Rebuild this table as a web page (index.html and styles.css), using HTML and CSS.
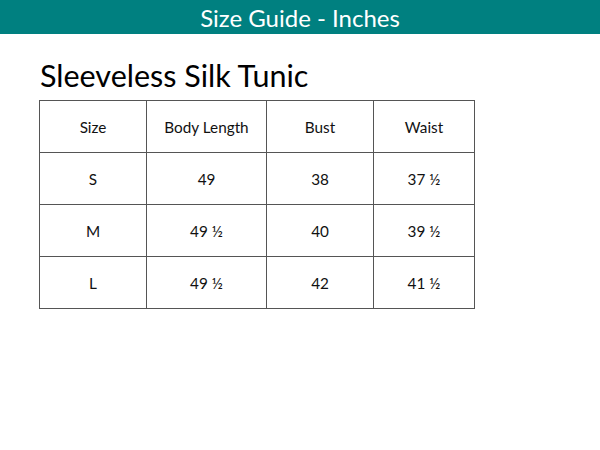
FILE: index.html
```html
<!DOCTYPE html>
<html>
<head>
<meta charset="utf-8">
<link rel="stylesheet" href="styles.css">
</head>
<body>
<header class="bar">Size Guide - Inches</header>
<main class="content">
  <h1 class="title">Sleeveless Silk Tunic</h1>
  <table class="sizes">
    <tr><td class="c1">Size</td><td class="c2">Body Length</td><td class="c3">Bust</td><td class="c4">Waist</td></tr>
    <tr><td>S</td><td>49</td><td>38</td><td>37 ½</td></tr>
    <tr><td>M</td><td>49 ½</td><td>40</td><td>39 ½</td></tr>
    <tr><td>L</td><td>49 ½</td><td>42</td><td>41 ½</td></tr>
  </table>
</main>
</body>
</html>
```
FILE: styles.css
```css
html, body {
  margin: 0;
  padding: 0;
  background: #fff;
  font-family: "Lato", "Open Sans", sans-serif;
  color: #111;
}
.bar {
  box-sizing: border-box;
  height: 34px;
  padding-top: 1px;
  background: #008080;
  color: #fff;
  font-size: 24px;
  line-height: 33px;
  text-align: center;
}
.content {
  padding: 20px 0 0 39px;
}
.title {
  margin: 0 0 4px 1px;
  font-weight: 400;
  font-size: 30.5px;
  line-height: 42px;
  color: #000;
}
.sizes {
  border-collapse: collapse;
}
.sizes td {
  border: 1px solid #555;
  height: 51px;
  padding: 0;
  text-align: center;
  font-size: 15.3px;
}
.c1 { width: 106px; }
.c2 { width: 119px; }
.c3 { width: 106px; }
.c4 { width: 100px; }
```
